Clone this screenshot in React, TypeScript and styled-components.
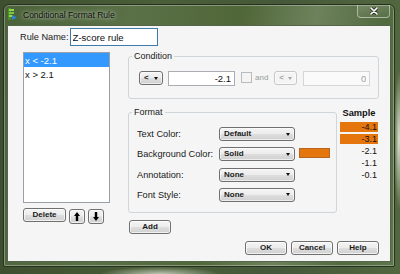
import React from "react";
import styled, { createGlobalStyle } from "styled-components";

const GlobalStyle = createGlobalStyle`
  html, body { margin: 0; padding: 0; }
  body {
    width: 400px;
    height: 274px;
    overflow: hidden;
    font-family: "Liberation Sans", Arial, sans-serif;
    background:
      radial-gradient(ellipse 5px 70px at 399px 140px, rgba(235,240,225,0.9), rgba(235,240,225,0)),
      radial-gradient(ellipse 60px 7px at 160px 274px, rgba(215,222,205,0.8), rgba(215,222,205,0)),
      linear-gradient(90deg, #3d4f2f 0%, #4a5e39 40%, #45593a 70%, #52663f 100%);
  }
`;

const Desktop = styled.div`
  box-sizing: border-box;
  width: 400px;
  height: 274px;
  padding: 4px 0 0 3px;
`;

const Window = styled.div`
  box-sizing: border-box;
  width: 392px;
  height: 263px;
  display: flex;
  flex-direction: column;
  padding: 0 3px 4px;
  border: 1px solid #26321d;
  border-radius: 6px 6px 2px 2px;
  background: linear-gradient(100deg, #4b6139 0%, #5a7047 30%, #506739 55%, #6d825c 72%, #526a40 88%, #60764d 100%);
  box-shadow: inset 0 0 0 1px rgba(255, 255, 255, 0.3);
`;

const TitleBar = styled.div`
  height: 20px;
  flex-shrink: 0;
  display: flex;
  align-items: flex-start;
`;

const TitleIcon = styled.svg`
  margin: 3px 0 0 1px;
  flex-shrink: 0;
`;

const TitleText = styled.div`
  flex: 1;
  margin: 1px 0 0 6px;
  font-size: 8.5px;
  line-height: 19px;
  color: #0c0c0c;
  text-shadow: 0 0 6px rgba(225, 235, 215, 0.85), 0 0 3px rgba(225, 235, 215, 0.6);
`;

const CloseButton = styled.div`
  box-sizing: border-box;
  width: 33px;
  height: 13px;
  margin-right: 1px;
  border: 1px solid rgba(255, 255, 255, 0.45);
  border-top: none;
  border-radius: 0 0 4px 4px;
  background: linear-gradient(rgba(255, 255, 255, 0.14), rgba(255, 255, 255, 0.04));
  display: flex;
  align-items: center;
  justify-content: center;
`;

const Client = styled.div`
  flex: 1;
  box-sizing: border-box;
  background: #f5f5f5;
  border: 1px solid #55654a;
  padding: 2px 11px 0 12px;
  display: flex;
  flex-direction: column;
  color: #1a1a1a;
`;

const RuleRow = styled.div`
  height: 18px;
  display: flex;
  align-items: center;
`;

const Label = styled.span`
  font-size: 9.2px;
  line-height: 12px;
  color: #1a1a1a;
  white-space: nowrap;
`;

const NameInput = styled.input`
  box-sizing: border-box;
  width: 88px;
  height: 18px;
  margin: 0 0 0 1px;
  padding: 0 2px;
  border: 1px solid #3d7bad;
  background: #fff;
  font-family: "Liberation Sans", Arial, sans-serif;
  font-size: 9.6px;
  color: #111;
  outline: none;
`;

const Main = styled.div`
  display: flex;
  margin-top: 4px;
`;

const LeftColumn = styled.div`
  width: 87px;
  margin-left: 3px;
  padding-top: 2px;
  display: flex;
  flex-direction: column;
`;

const ListBox = styled.div`
  box-sizing: border-box;
  width: 87px;
  height: 151px;
  border: 1px solid #9aa0a8;
  background: #fff;
`;

const ListItem = styled.div<{ $selected?: boolean }>`
  box-sizing: border-box;
  height: 14px;
  padding: 2px 0 0 1px;
  font-size: 9.5px;
  line-height: 12px;
  background: ${(p) => (p.$selected ? "#3399ff" : "transparent")};
  color: ${(p) => (p.$selected ? "#ffffff" : "#111111")};
`;

const ListButtons = styled.div`
  display: flex;
  align-items: flex-start;
  gap: 3px;
  margin-top: 5px;
`;

const Button = styled.button<{ $w: number; $h?: number; $top?: number }>`
  box-sizing: border-box;
  width: ${(p) => p.$w}px;
  height: ${(p) => p.$h ?? 14}px;
  margin: ${(p) => p.$top ?? 0}px 0 0 0;
  padding: 0;
  border: 1px solid #707070;
  border-radius: 3px;
  background: linear-gradient(#f4f4f4 0%, #ececec 48%, #dedede 52%, #d0d0d0 100%);
  box-shadow: inset 0 0 0 1px rgba(255, 255, 255, 0.7);
  font-family: "Liberation Sans", Arial, sans-serif;
  font-weight: bold;
  font-size: 8px;
  line-height: 12px;
  color: #1a1a1a;
  display: flex;
  align-items: center;
  justify-content: center;
`;

const RightColumn = styled.div`
  width: 251px;
  margin-left: 18px;
  display: flex;
  flex-direction: column;
`;

const Group = styled.fieldset<{ $w?: number }>`
  box-sizing: border-box;
  width: ${(p) => (p.$w ? `${p.$w}px` : "auto")};
  margin: 0;
  padding: 0;
  min-width: 0;
  border: 1px solid #d0d5d9;
  border-radius: 3px;
`;

const Legend = styled.legend`
  margin-left: 3px;
  padding: 0 2px;
  font-size: 9px;
  line-height: 12px;
  color: #1a1a1a;
`;

const ConditionBody = styled.div`
  display: flex;
  align-items: flex-start;
  padding: 9px 0 12px 10px;
`;

const Combo = styled.div<{ $w: number; $disabled?: boolean; $left?: number }>`
  box-sizing: border-box;
  width: ${(p) => p.$w}px;
  height: 14px;
  margin-left: ${(p) => p.$left ?? 0}px;
  padding: 0 4px 0 4px;
  border: 1px solid ${(p) => (p.$disabled ? "#c4c8cb" : "#707070")};
  border-radius: 3px;
  background: ${(p) =>
    p.$disabled
      ? "#f4f4f4"
      : "linear-gradient(#f4f4f4 0%, #ececec 48%, #dedede 52%, #d0d0d0 100%)"};
  box-shadow: inset 0 0 0 1px rgba(255, 255, 255, 0.6);
  display: flex;
  align-items: center;
  justify-content: space-between;
  font-weight: bold;
  font-size: 8px;
  line-height: 12px;
  color: ${(p) => (p.$disabled ? "#a6a6a6" : "#1a1a1a")};
`;

const Arrow = styled.span<{ $disabled?: boolean }>`
  width: 0;
  height: 0;
  border-left: 2.5px solid transparent;
  border-right: 2.5px solid transparent;
  border-top: 3px solid ${(p) => (p.$disabled ? "#a6a6a6" : "#111")};
`;

const ValueInput = styled.input<{ $disabled?: boolean; $left?: number }>`
  box-sizing: border-box;
  width: 67px;
  height: 15px;
  margin: 0 0 0 ${(p) => p.$left ?? 0}px;
  padding: 0 3px;
  border: 1px solid ${(p) => (p.$disabled ? "#d3d6d9" : "#abadb3")};
  background: ${(p) => (p.$disabled ? "#fafafa" : "#fff")};
  text-align: right;
  font-family: "Liberation Sans", Arial, sans-serif;
  font-size: 9.5px;
  color: ${(p) => (p.$disabled ? "#a0a0a0" : "#111")};
  outline: none;
`;

const CheckBox = styled.span`
  box-sizing: border-box;
  width: 11px;
  height: 11px;
  margin: 1px 0 0 6px;
  border: 1px solid #b9bcbf;
  background: #f4f4f4;
`;

const AndText = styled.span`
  margin: 1px 0 0 3px;
  font-size: 8px;
  line-height: 12px;
  color: #9a9a9a;
`;

const FormatRow = styled.div`
  display: flex;
  align-items: flex-start;
  margin-top: 7px;
`;

const FormatGrid = styled.div`
  display: grid;
  grid-template-columns: 82px 76px auto;
  grid-auto-rows: 14px;
  row-gap: 6.3px;
  align-items: center;
  padding: 9px 0 10px 8px;
`;

const Swatch = styled.span`
  box-sizing: border-box;
  align-self: start;
  width: 31px;
  height: 10px;
  margin: 1px 0 0 4px;
  background: #e5760e;
  border: 1px solid #b8651d;
`;

const SampleColumn = styled.div`
  width: 38px;
  margin-left: 3px;
  display: flex;
  flex-direction: column;
`;

const SampleTitle = styled.div`
  text-align: center;
  font-weight: bold;
  font-size: 9.3px;
  line-height: 15px;
  color: #111;
`;

const SampleRow = styled.div`
  height: 12px;
  display: flex;
  align-items: center;
`;

const SampleValue = styled.span<{ $hit?: boolean }>`
  flex: 1;
  height: 10px;
  padding-right: 1px;
  text-align: right;
  font-size: 9px;
  line-height: 10px;
  color: #111;
  background: ${(p) => (p.$hit ? "#e5760e" : "transparent")};
`;

const AddRow = styled.div`
  margin: 7px 0 0 1px;
`;

const DialogButtons = styled.div`
  display: flex;
  justify-content: flex-end;
  gap: 4px;
  margin-top: 7px;
`;

const UpIcon = ({ down }: { down?: boolean }) => (
  <svg width="6" height="9" viewBox="0 0 6 9" style={down ? { transform: "rotate(180deg)" } : undefined}>
    <path d="M3 0 L6 4 L4.2 4 L4.2 9 L1.8 9 L1.8 4 L0 4 Z" fill="#000" />
  </svg>
);

const formatRows: { label: string; value: string; swatch?: boolean }[] = [
  { label: "Text Color:", value: "Default" },
  { label: "Background Color:", value: "Solid", swatch: true },
  { label: "Annotation:", value: "None" },
  { label: "Font Style:", value: "None" },
];

const samples = [
  { v: "-4.1", hit: true },
  { v: "-3.1", hit: true },
  { v: "-2.1" },
  { v: "-1.1" },
  { v: "-0.1" },
];

export default function App() {
  return (
    <>
      <GlobalStyle />
      <Desktop>
        <Window>
          <TitleBar>
            <TitleIcon width="9" height="12" viewBox="0 0 9 12">
              <rect x="0" y="0" width="3" height="12" fill="#4a8f2a" />
              <rect x="1" y="1" width="5" height="2" fill="#8fd74c" />
              <rect x="1" y="4" width="5" height="2" fill="#7cc93e" />
              <rect x="1" y="7" width="4" height="2" fill="#8fd74c" />
              <path d="M4 7 L9 9.5 L4 12 Z" fill="#2f86d8" />
            </TitleIcon>
            <TitleText>Conditional Format Rule</TitleText>
            <CloseButton>
              <svg width="8" height="8" viewBox="0 0 8 8">
                <path d="M1 1 L7 7 M7 1 L1 7" stroke="#2a3322" strokeWidth="3.2" strokeLinecap="round" />
                <path d="M1 1 L7 7 M7 1 L1 7" stroke="#ffffff" strokeWidth="1.7" strokeLinecap="round" />
              </svg>
            </CloseButton>
          </TitleBar>
          <Client>
            <RuleRow>
              <Label>Rule Name:</Label>
              <NameInput readOnly value="Z-score rule" />
            </RuleRow>
            <Main>
              <LeftColumn>
                <ListBox>
                  <ListItem $selected>x &lt; -2.1</ListItem>
                  <ListItem>x &gt; 2.1</ListItem>
                </ListBox>
                <ListButtons>
                  <Button $w={43}>Delete</Button>
                  <Button $w={16} $h={15} $top={1}>
                    <UpIcon />
                  </Button>
                  <Button $w={16} $h={15} $top={1}>
                    <UpIcon down />
                  </Button>
                </ListButtons>
              </LeftColumn>
              <RightColumn>
                <Group>
                  <Legend>Condition</Legend>
                  <ConditionBody>
                    <Combo $w={24}>
                      <span>&lt;</span>
                      <Arrow />
                    </Combo>
                    <ValueInput readOnly value="-2.1" $left={5} />
                    <CheckBox />
                    <AndText>and</AndText>
                    <Combo $w={23} $disabled $left={6}>
                      <span>&lt;</span>
                      <Arrow $disabled />
                    </Combo>
                    <ValueInput readOnly value="0" $disabled $left={6} />
                  </ConditionBody>
                </Group>
                <FormatRow>
                  <Group $w={209}>
                    <Legend>Format</Legend>
                    <FormatGrid>
                      {formatRows.map((r) => (
                        <React.Fragment key={r.label}>
                          <Label>{r.label}</Label>
                          <Combo $w={76}>
                            <span>{r.value}</span>
                            <Arrow />
                          </Combo>
                          {r.swatch ? <Swatch /> : <span />}
                        </React.Fragment>
                      ))}
                    </FormatGrid>
                  </Group>
                  <SampleColumn>
                    <SampleTitle>Sample</SampleTitle>
                    {samples.map((s) => (
                      <SampleRow key={s.v}>
                        <SampleValue $hit={s.hit}>{s.v}</SampleValue>
                      </SampleRow>
                    ))}
                  </SampleColumn>
                </FormatRow>
                <AddRow>
                  <Button $w={42}>Add</Button>
                </AddRow>
                <DialogButtons>
                  <Button $w={42}>OK</Button>
                  <Button $w={42}>Cancel</Button>
                  <Button $w={42}>Help</Button>
                </DialogButtons>
              </RightColumn>
            </Main>
          </Client>
        </Window>
      </Desktop>
    </>
  );
}
